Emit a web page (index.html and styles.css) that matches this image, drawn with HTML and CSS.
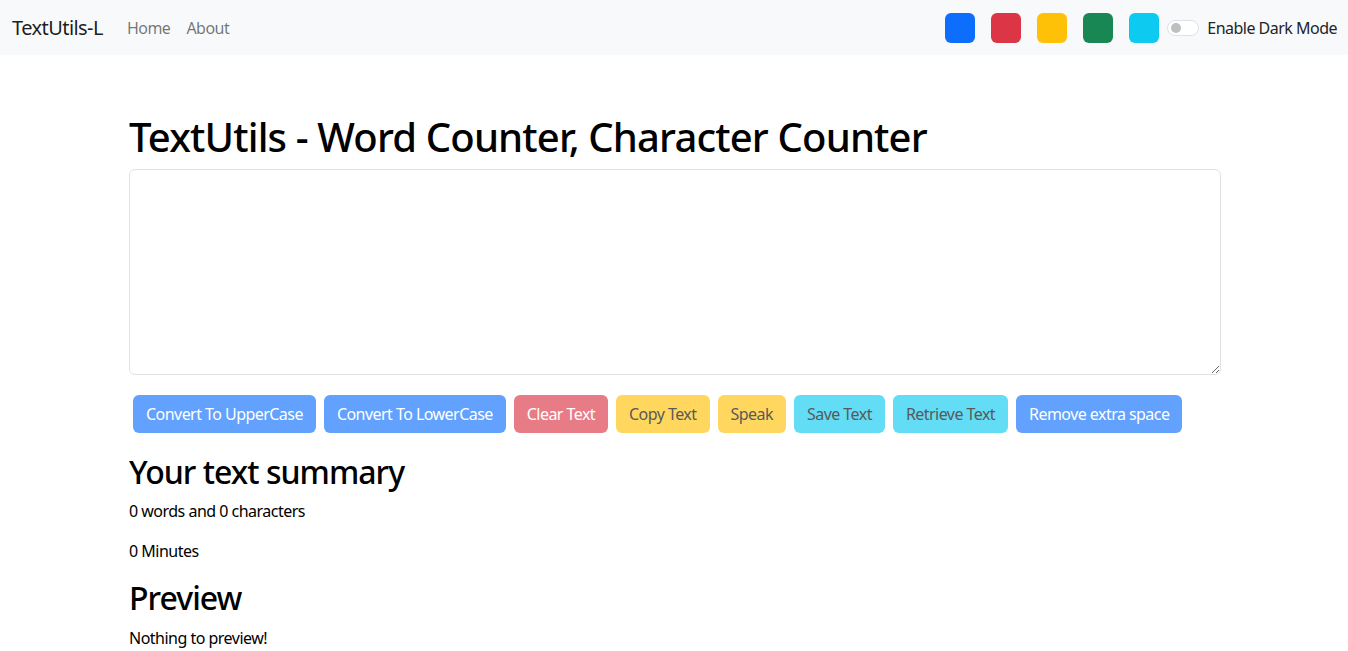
FILE: index.html
```html
<!DOCTYPE html>
<html lang="en">
<head>
<meta charset="utf-8">
<title>TextUtils-L</title>
<link rel="stylesheet" href="styles.css">
</head>
<body>
<nav class="navbar">
  <a class="brand" href="#">TextUtils-L</a>
  <ul class="nav-links">
    <li><a href="#">Home</a></li>
    <li><a href="#">About</a></li>
  </ul>
  <div class="nav-right">
    <div class="swatches">
      <span class="swatch sw-primary"></span>
      <span class="swatch sw-danger"></span>
      <span class="swatch sw-warning"></span>
      <span class="swatch sw-success"></span>
      <span class="swatch sw-info"></span>
    </div>
    <label class="switch">
      <span class="switch-track"><span class="switch-knob"></span></span>
      <span class="switch-label">Enable Dark Mode</span>
    </label>
  </div>
</nav>

<main class="container top">
  <h1 class="title">TextUtils - Word Counter, Character Counter</h1>
  <div class="field">
    <textarea class="textarea" rows="8"></textarea>
  </div>
  <div class="buttons">
    <button class="btn btn-primary">Convert To UpperCase</button>
    <button class="btn btn-primary">Convert To LowerCase</button>
    <button class="btn btn-danger">Clear Text</button>
    <button class="btn btn-warning">Copy Text</button>
    <button class="btn btn-warning">Speak</button>
    <button class="btn btn-info">Save Text</button>
    <button class="btn btn-info">Retrieve Text</button>
    <button class="btn btn-primary">Remove extra space</button>
  </div>
</main>

<section class="container summary">
  <h2>Your text summary</h2>
  <p>0 words and 0 characters</p>
  <p>0 Minutes</p>
  <h2>Preview</h2>
  <p>Nothing to preview!</p>
</section>
</body>
</html>
```

FILE: styles.css
```css
* { box-sizing: border-box; }

html, body {
  margin: 0;
  padding: 0;
  background: #fff;
  color: #212529;
  font-family: "Noto Sans", "Open Sans", sans-serif;
  font-size: 16px;
  line-height: 1.5;
  letter-spacing: -0.032em;
}

.navbar {
  height: 55px;
  background: #f8f9fa;
  display: flex;
  align-items: center;
  padding: 0 11px 0 12px;
}

.brand {
  font-size: 20px;
  color: rgba(0,0,0,.9);
  text-decoration: none;
  margin-right: 16px;
  letter-spacing: -0.028em;
}

.nav-links {
  display: flex;
  list-style: none;
  margin: 0;
  padding: 0;
}

.nav-links a {
  display: block;
  padding: 8px 8px;
  color: rgba(0,0,0,.55);
  text-decoration: none;
}

.nav-right {
  margin-left: auto;
  display: flex;
  align-items: center;
}

.swatches {
  display: flex;
  gap: 16px;
  margin-right: 8px;
}

.swatch {
  width: 30px;
  height: 30px;
  border-radius: 6px;
  display: block;
}
.sw-primary { background: #0d6efd; }
.sw-danger { background: #dc3545; }
.sw-warning { background: #ffc107; }
.sw-success { background: #198754; }
.sw-info { background: #0dcaf0; }

.switch {
  display: flex;
  align-items: center;
  gap: 8px;
}

.switch-track {
  width: 32px;
  height: 16px;
  border: 1px solid #dee2e6;
  border-radius: 8px;
  background: #fff;
  display: flex;
  align-items: center;
  padding-left: 3px;
}

.switch-knob {
  width: 10px;
  height: 10px;
  border-radius: 50%;
  background: #bfbfbf;
}

.switch-label {
  color: #212529;
}

.container {
  width: 1092px;
  margin-left: calc(50% - 545px);
}

.top { padding-top: 58px; }

.title {
  font-size: 40px;
  font-weight: 500;
  line-height: 1.2;
  margin: 0 0 8px;
  color: #000;
  letter-spacing: -0.021em;
}

.field { margin-bottom: 16px; }

.textarea {
  display: block;
  width: 100%;
  height: 206px;
  border: 1px solid #dee2e6;
  border-radius: 6px;
  padding: 6px 12px;
  font: inherit;
  resize: vertical;
}

.buttons {
  display: flex;
  flex-wrap: wrap;
}

.btn {
  margin: 4px;
  padding: 6px 12px;
  border: 1px solid transparent;
  border-radius: 6px;
  font: inherit;
  letter-spacing: -0.034em;
  line-height: 24px;
}

.btn-primary { background: #62a1fe; color: #fff; }
.btn-danger { background: #e87c86; color: #fff; }
.btn-warning { background: #ffd75e; color: #595959; }
.btn-info { background: #62ddf5; color: #595959; }

.summary {
  margin-top: 16px;
}

.summary h2 {
  font-size: 32px;
  font-weight: 500;
  line-height: 1.2;
  margin: 0 0 8px;
  color: #000;
  letter-spacing: -0.03em;
}

.summary p {
  margin: 0 0 16px;
  color: #000;
}
```
